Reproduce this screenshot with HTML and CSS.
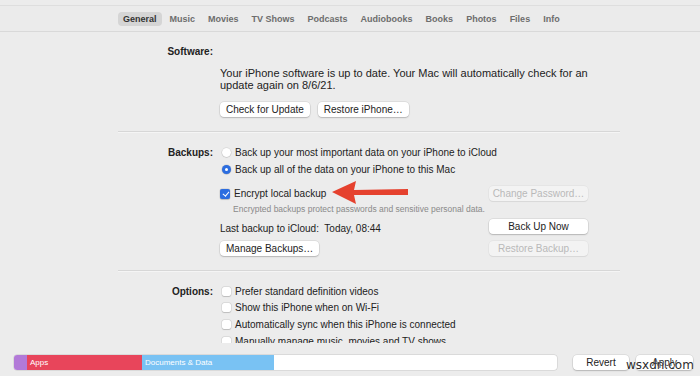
FILE: index.html
```html
<!DOCTYPE html>
<html lang="en">
<head>
    <meta charset="UTF-8">
    <title>iPhone - General</title>
    <link rel="stylesheet" href="styles.css">
</head>
<body>

<div class="window">
    <!-- tabs -->
    <div class="tabbar">
        <span class="tab active">General</span>
        <span class="tab">Music</span>
        <span class="tab">Movies</span>
        <span class="tab">TV Shows</span>
        <span class="tab">Podcasts</span>
        <span class="tab">Audiobooks</span>
        <span class="tab">Books</span>
        <span class="tab">Photos</span>
        <span class="tab">Files</span>
        <span class="tab">Info</span>
    </div>

    <div class="content">
        <!-- software -->
        <section class="pane software">
            <div class="label">Software:</div>
            <div class="body">
                <p class="note">Your iPhone software is up to date. Your Mac will automatically check for an<br>update again on 8/6/21.</p>
                <div class="btn-row">
                    <button class="btn">Check for Update</button>
                    <button class="btn">Restore iPhone…</button>
                </div>
            </div>
        </section>

        <hr class="sep">

        <!-- backups -->
        <section class="pane backups">
            <div class="label">Backups:</div>
            <div class="body">
                <div class="brow">
                    <label class="opt span"><span class="radio"></span>Back up your most important data on your iPhone to iCloud</label>
                </div>
                <div class="brow">
                    <label class="opt span"><span class="radio on"></span>Back up all of the data on your iPhone to this Mac</label>
                </div>
                <div class="brow row-encrypt">
                    <label class="opt"><span class="check on"></span>Encrypt local backup</label>
                    <button class="btn wide" disabled>Change Password…</button>
                    <svg class="arrow" width="80" height="26" viewBox="0 0 80 26">
                        <path d="M0 12 L24 1 L22 10 L76 9 L76 15 L22 15 L24 24 Z" fill="#e5412e"/>
                    </svg>
                </div>
                <div class="brow small-row">
                    <p class="small">Encrypted backups protect passwords and sensitive personal data.</p>
                </div>
                <div class="brow row-last">
                    <span class="plain">Last backup to iCloud:&nbsp; Today, 08:44</span>
                    <button class="btn wide">Back Up Now</button>
                </div>
                <div class="brow row-manage">
                    <div><button class="btn">Manage Backups…</button></div>
                    <button class="btn wide" disabled>Restore Backup…</button>
                </div>
            </div>
        </section>

        <hr class="sep">

        <!-- options -->
        <section class="pane options">
            <div class="label">Options:</div>
            <div class="body">
                <label class="opt"><span class="check"></span>Prefer standard definition videos</label>
                <label class="opt"><span class="check"></span>Show this iPhone when on Wi-Fi</label>
                <label class="opt"><span class="check"></span>Automatically sync when this iPhone is connected</label>
                <label class="opt"><span class="check"></span>Manually manage music, movies and TV shows</label>
            </div>
        </section>
    </div>

    <!-- storage + actions -->
    <div class="footer">
        <div class="storage">
            <span class="seg seg-other"></span>
            <span class="seg seg-apps">Apps</span>
            <span class="seg seg-docs">Documents &amp; Data</span>
        </div>
        <button class="btn foot-btn">Revert</button>
        <button class="btn foot-btn">Apply</button>
        <span class="watermark">wsxdn.com</span>
    </div>
</div>

</body>
</html>
```

FILE: styles.css
```css
body {
    margin: 0;
    background-color: #ececec;
    font-family: "Liberation Sans", Arial, sans-serif;
    color: #222;
}
.window {
    width: 700px;
    height: 376px;
    overflow: hidden;
    position: relative;
}

/* tabs */
.tabbar {
    margin-top: 5px;
    height: 25px;
    border-top: 1px solid #dedede;
    border-bottom: 1px solid #d9d9d9;
    background-color: #ebebeb;
    display: flex;
    align-items: center;
    gap: 3px;
    padding-left: 118px;
}
.tab {
    font-size: 9px;
    font-weight: bold;
    color: #6d6d6d;
    padding: 2px 5px;
    border-radius: 4px;
}
.tab.active {
    background-color: #d5d5d5;
    color: #333;
}

/* panes */
.content {
    height: 311px;
    overflow: hidden;
}
.pane {
    display: grid;
    grid-template-columns: 95px 400px;
    column-gap: 7px;
    margin-left: 118px;
    font-size: 10px;
}
.label {
    font-weight: bold;
    text-align: right;
    line-height: 17px;
}
.software { padding-top: 11px; }
.software .body { padding-top: 24px; }
.note {
    margin: 0;
    font-size: 11px;
    line-height: 12px;
}
.btn-row {
    display: flex;
    gap: 8px;
    margin-top: 11px;
}
.btn {
    font-family: inherit;
    font-size: 10px;
    color: #222;
    background-color: #fff;
    border: none;
    border-radius: 4px;
    height: 15px;
    padding: 0 6px;
    white-space: nowrap;
    box-shadow: 0 0 0 0.5px rgba(0, 0, 0, 0.12), 0 1px 1.5px rgba(0, 0, 0, 0.18);
}
.btn:disabled {
    background-color: #f3f3f3;
    color: #b9b9b9;
    box-shadow: 0 0 0 0.5px rgba(0, 0, 0, 0.06), 0 1px 1px rgba(0, 0, 0, 0.06);
}
.btn.wide { width: 99px; padding: 0; }

.sep {
    margin: 14px 0 0 118px;
    width: 502px;
    height: 0;
    border: none;
    border-top: 1px solid #d7d7d7;
    border-bottom: 1px solid #f5f5f5;
}

/* backups */
.backups { padding-top: 11px; }
.brow {
    display: grid;
    grid-template-columns: 260px 99px;
    column-gap: 9px;
    align-items: center;
    position: relative;
}
.opt {
    display: flex;
    align-items: center;
    gap: 4px;
    height: 17px;
    white-space: nowrap;
}
.opt.span { grid-column: 1 / 3; }
.row-encrypt { margin-top: 7px; height: 16px; }
.small-row { margin-top: 2px; }
.small {
    grid-column: 1 / 3;
    margin: 0 0 0 13px;
    font-size: 8.5px;
    line-height: 12px;
    color: #8a8a8a;
}
.row-last { margin-top: 4px; height: 15px; }
.plain { padding-top: 3px; }
.row-manage { margin-top: 7px; }
.arrow {
    position: absolute;
    left: 112px;
    top: -5px;
}

.radio, .check {
    flex-shrink: 0;
    display: inline-block;
    width: 9px;
    height: 9px;
    margin-left: 2px;
    background-color: #fff;
    box-shadow: 0 0 0 0.5px rgba(0, 0, 0, 0.12), 0 0.5px 1px rgba(0, 0, 0, 0.15);
    box-sizing: border-box;
    position: relative;
}
.radio { border-radius: 50%; }
.radio.on {
    background-color: #2c6de0;
}
.radio.on::after {
    content: "";
    position: absolute;
    left: 3px;
    top: 3px;
    width: 3px;
    height: 3px;
    border-radius: 50%;
    background-color: #fff;
}
.check { border-radius: 2px; }
.check.on {
    width: 10px;
    height: 10px;
    margin-left: 0;
    background-color: #2c6de0;
}
.check.on::after {
    content: "";
    position: absolute;
    left: 3.5px;
    top: 1px;
    width: 2.5px;
    height: 5px;
    border: solid #fff;
    border-width: 0 1.5px 1.5px 0;
    transform: rotate(40deg);
}

/* options */
.options { padding-top: 11px; }
.options .body { display: flex; flex-direction: column; }
.options .opt { height: 16.6px; }

/* footer */
.footer {
    display: flex;
    align-items: center;
    padding: 12px 0 0 14px;
    position: relative;
}
.storage {
    width: 543px;
    height: 15px;
    display: flex;
    background-color: #fff;
    border-radius: 3px;
    box-shadow: 0 0 0 0.5px rgba(0, 0, 0, 0.15);
    overflow: hidden;
}
.seg {
    font-size: 8px;
    color: #fff;
    line-height: 15px;
    padding-left: 3px;
    box-sizing: border-box;
}
.seg-other { width: 13px; background-color: #b27ad8; padding: 0; }
.seg-apps { width: 115px; background-color: #e8455b; }
.seg-docs { width: 132px; background-color: #79c2f3; }
.foot-btn {
    width: 56px;
    margin-left: 16px;
}
.foot-btn + .foot-btn {
    width: 57px;
    margin-left: 7px;
}
.watermark {
    position: absolute;
    left: 626px;
    top: 15px;
    font-family: "DejaVu Sans", sans-serif;
    font-size: 12px;
    color: #2b2b2b;
    text-shadow: 0 0 2px #fff;
}
```
